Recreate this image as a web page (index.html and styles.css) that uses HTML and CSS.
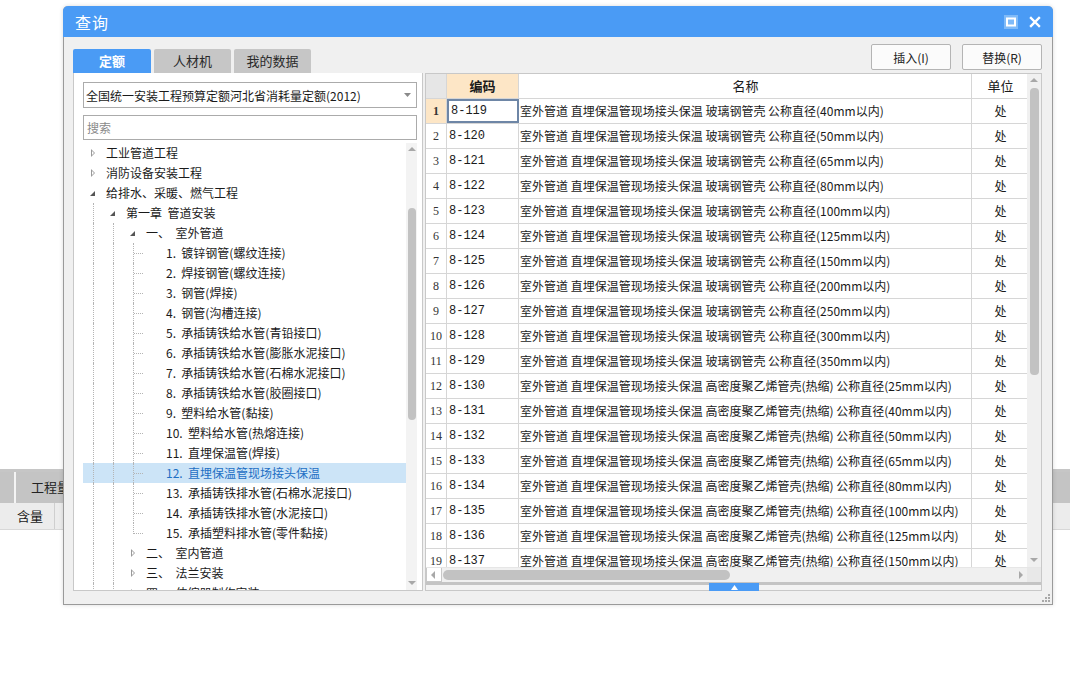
FILE: index.html
```html
<!DOCTYPE html>
<html lang="zh">
<head>
<meta charset="utf-8">
<title>查询</title>
<link rel="stylesheet" href="styles.css">
</head>
<body>
<div class="desk">
  <div class="bg-strip">
    <div class="bg-bar">
      <div class="bg-cell bg-cell-a"></div>
      <div class="bg-cell bg-cell-b">工程量</div>
    </div>
    <div class="bg-row">
      <div class="bg-sub">含量</div>
    </div>
  </div>

  <div class="dialog">
    <div class="titlebar">
      <span class="title">查询</span>
      <div class="tb-btns">
        <span class="tb-max"><svg width="14" height="14" viewBox="0 0 14 14"><rect x="0" y="0" width="14" height="14" fill="#7fbaf8"/><rect x="3" y="3.5" width="8" height="7" fill="none" stroke="#fff" stroke-width="2"/></svg></span>
        <span class="tb-close"><svg width="12" height="12" viewBox="0 0 12 12"><path d="M2 2 L10 10 M10 2 L2 10" stroke="#fff" stroke-width="2.4" stroke-linecap="square"/></svg></span>
      </div>
    </div>
    <div class="body">
      <div class="toolbar">
        <div class="tabs">
          <div class="tab active">定额</div>
          <div class="tab">人材机</div>
          <div class="tab">我的数据</div>
        </div>
        <div class="actions">
          <button class="btn">插入(I)</button>
          <button class="btn">替换(R)</button>
        </div>
      </div>
      <div class="panels">
        <div class="left">
          <div class="combo"><span>全国统一安装工程预算定额河北省消耗量定额(2012)</span><svg width="7" height="4" viewBox="0 0 7 4"><path d="M0 0 H7 L3.5 4Z" fill="#8a8a8a"/></svg></div>
          <div class="search">搜索</div>
          <div class="tree-wrap">
            <div class="tree">
              <div class="node l0"><i class="tw col"></i><span>工业管道工程</span></div>
              <div class="node l0"><i class="tw col"></i><span>消防设备安装工程</span></div>
              <div class="node l0"><i class="tw exp"></i><span>给排水、采暖、燃气工程</span></div>
              <div class="node l1"><i class="g g1"></i><i class="tw exp"></i><span>第一章  管道安装</span></div>
              <div class="node l2"><i class="g g1"></i><i class="g g2"></i><i class="tw exp"></i><span>一、  室外管道</span></div>
              <div class="node leaf"><i class="g g1"></i><i class="g g2"></i><i class="g g3"></i><i class="h"></i><span>1.  镀锌钢管(螺纹连接)</span></div>
              <div class="node leaf"><i class="g g1"></i><i class="g g2"></i><i class="g g3"></i><i class="h"></i><span>2.  焊接钢管(螺纹连接)</span></div>
              <div class="node leaf"><i class="g g1"></i><i class="g g2"></i><i class="g g3"></i><i class="h"></i><span>3.  钢管(焊接)</span></div>
              <div class="node leaf"><i class="g g1"></i><i class="g g2"></i><i class="g g3"></i><i class="h"></i><span>4.  钢管(沟槽连接)</span></div>
              <div class="node leaf"><i class="g g1"></i><i class="g g2"></i><i class="g g3"></i><i class="h"></i><span>5.  承插铸铁给水管(青铅接口)</span></div>
              <div class="node leaf"><i class="g g1"></i><i class="g g2"></i><i class="g g3"></i><i class="h"></i><span>6.  承插铸铁给水管(膨胀水泥接口)</span></div>
              <div class="node leaf"><i class="g g1"></i><i class="g g2"></i><i class="g g3"></i><i class="h"></i><span>7.  承插铸铁给水管(石棉水泥接口)</span></div>
              <div class="node leaf"><i class="g g1"></i><i class="g g2"></i><i class="g g3"></i><i class="h"></i><span>8.  承插铸铁给水管(胶圈接口)</span></div>
              <div class="node leaf"><i class="g g1"></i><i class="g g2"></i><i class="g g3"></i><i class="h"></i><span>9.  塑料给水管(黏接)</span></div>
              <div class="node leaf"><i class="g g1"></i><i class="g g2"></i><i class="g g3"></i><i class="h"></i><span>10.  塑料给水管(热熔连接)</span></div>
              <div class="node leaf"><i class="g g1"></i><i class="g g2"></i><i class="g g3"></i><i class="h"></i><span>11.  直埋保温管(焊接)</span></div>
              <div class="node leaf sel"><i class="g g1"></i><i class="g g2"></i><i class="g g3"></i><i class="h"></i><span>12.  直埋保温管现场接头保温</span></div>
              <div class="node leaf"><i class="g g1"></i><i class="g g2"></i><i class="g g3"></i><i class="h"></i><span>13.  承插铸铁排水管(石棉水泥接口)</span></div>
              <div class="node leaf"><i class="g g1"></i><i class="g g2"></i><i class="g g3"></i><i class="h"></i><span>14.  承插铸铁排水管(水泥接口)</span></div>
              <div class="node leaf last"><i class="g g1"></i><i class="g g2"></i><i class="g g3"></i><i class="h"></i><span>15.  承插塑料排水管(零件黏接)</span></div>
              <div class="node l2"><i class="g g1"></i><i class="g g2"></i><i class="tw col"></i><span>二、  室内管道</span></div>
              <div class="node l2"><i class="g g1"></i><i class="g g2"></i><i class="tw col"></i><span>三、  法兰安装</span></div>
              <div class="node l2"><i class="g g1"></i><i class="g g2"></i><i class="tw col"></i><span>四、  伸缩器制作安装</span></div>
            </div>
            <div class="vscroll small">
              <div class="arr up"></div>
              <div class="track"><div class="thumb t-left"></div></div>
              <div class="arr down"></div>
            </div>
          </div>
        </div>
        <div class="right">
          <div class="grid-main">
            <div class="grid">
              <div class="grow ghead">
                <div class="c cn"></div>
                <div class="c cc hl">编码</div>
                <div class="c cname center">名称</div>
                <div class="c cu">单位</div>
              </div>
              <div class="rows">
                <div class="grow"><div class="c cn hl b">1</div><div class="c cc cur">8-119</div><div class="c cname">室外管道 直埋保温管现场接头保温 玻璃钢管壳 公称直径(40mm以内)</div><div class="c cu">处</div></div>
                <div class="grow"><div class="c cn">2</div><div class="c cc">8-120</div><div class="c cname">室外管道 直埋保温管现场接头保温 玻璃钢管壳 公称直径(50mm以内)</div><div class="c cu">处</div></div>
                <div class="grow"><div class="c cn">3</div><div class="c cc">8-121</div><div class="c cname">室外管道 直埋保温管现场接头保温 玻璃钢管壳 公称直径(65mm以内)</div><div class="c cu">处</div></div>
                <div class="grow"><div class="c cn">4</div><div class="c cc">8-122</div><div class="c cname">室外管道 直埋保温管现场接头保温 玻璃钢管壳 公称直径(80mm以内)</div><div class="c cu">处</div></div>
                <div class="grow"><div class="c cn">5</div><div class="c cc">8-123</div><div class="c cname">室外管道 直埋保温管现场接头保温 玻璃钢管壳 公称直径(100mm以内)</div><div class="c cu">处</div></div>
                <div class="grow"><div class="c cn">6</div><div class="c cc">8-124</div><div class="c cname">室外管道 直埋保温管现场接头保温 玻璃钢管壳 公称直径(125mm以内)</div><div class="c cu">处</div></div>
                <div class="grow"><div class="c cn">7</div><div class="c cc">8-125</div><div class="c cname">室外管道 直埋保温管现场接头保温 玻璃钢管壳 公称直径(150mm以内)</div><div class="c cu">处</div></div>
                <div class="grow"><div class="c cn">8</div><div class="c cc">8-126</div><div class="c cname">室外管道 直埋保温管现场接头保温 玻璃钢管壳 公称直径(200mm以内)</div><div class="c cu">处</div></div>
                <div class="grow"><div class="c cn">9</div><div class="c cc">8-127</div><div class="c cname">室外管道 直埋保温管现场接头保温 玻璃钢管壳 公称直径(250mm以内)</div><div class="c cu">处</div></div>
                <div class="grow"><div class="c cn">10</div><div class="c cc">8-128</div><div class="c cname">室外管道 直埋保温管现场接头保温 玻璃钢管壳 公称直径(300mm以内)</div><div class="c cu">处</div></div>
                <div class="grow"><div class="c cn">11</div><div class="c cc">8-129</div><div class="c cname">室外管道 直埋保温管现场接头保温 玻璃钢管壳 公称直径(350mm以内)</div><div class="c cu">处</div></div>
                <div class="grow"><div class="c cn">12</div><div class="c cc">8-130</div><div class="c cname">室外管道 直埋保温管现场接头保温 高密度聚乙烯管壳(热缩) 公称直径(25mm以内)</div><div class="c cu">处</div></div>
                <div class="grow"><div class="c cn">13</div><div class="c cc">8-131</div><div class="c cname">室外管道 直埋保温管现场接头保温 高密度聚乙烯管壳(热缩) 公称直径(40mm以内)</div><div class="c cu">处</div></div>
                <div class="grow"><div class="c cn">14</div><div class="c cc">8-132</div><div class="c cname">室外管道 直埋保温管现场接头保温 高密度聚乙烯管壳(热缩) 公称直径(50mm以内)</div><div class="c cu">处</div></div>
                <div class="grow"><div class="c cn">15</div><div class="c cc">8-133</div><div class="c cname">室外管道 直埋保温管现场接头保温 高密度聚乙烯管壳(热缩) 公称直径(65mm以内)</div><div class="c cu">处</div></div>
                <div class="grow"><div class="c cn">16</div><div class="c cc">8-134</div><div class="c cname">室外管道 直埋保温管现场接头保温 高密度聚乙烯管壳(热缩) 公称直径(80mm以内)</div><div class="c cu">处</div></div>
                <div class="grow"><div class="c cn">17</div><div class="c cc">8-135</div><div class="c cname">室外管道 直埋保温管现场接头保温 高密度聚乙烯管壳(热缩) 公称直径(100mm以内)</div><div class="c cu">处</div></div>
                <div class="grow"><div class="c cn">18</div><div class="c cc">8-136</div><div class="c cname">室外管道 直埋保温管现场接头保温 高密度聚乙烯管壳(热缩) 公称直径(125mm以内)</div><div class="c cu">处</div></div>
                <div class="grow"><div class="c cn">19</div><div class="c cc">8-137</div><div class="c cname">室外管道 直埋保温管现场接头保温 高密度聚乙烯管壳(热缩) 公称直径(150mm以内)</div><div class="c cu">处</div></div>
              </div>
            </div>
            <div class="vscroll big">
              <div class="arr up"></div>
              <div class="track"><div class="thumb t-right"></div></div>
              <div class="arr down"></div>
            </div>
          </div>
          <div class="hscroll">
            <div class="harr left"></div>
            <div class="htrack"><div class="hthumb"></div></div>
            <div class="harr right-a"></div>
            <div class="corner"></div>
          </div>
          <div class="splitter">
            <div class="split-tab"><svg width="7" height="5" viewBox="0 0 7 5"><path d="M0 5 H7 L3.5 0Z" fill="#fff"/></svg></div>
          </div>
        </div>
      </div>
      <div class="grip"><svg width="8" height="8" viewBox="0 0 8 8"><g fill="#a8a8a8"><rect x="6" y="0" width="2" height="2"/><rect x="3" y="3" width="2" height="2"/><rect x="6" y="3" width="2" height="2"/><rect x="0" y="6" width="2" height="2"/><rect x="3" y="6" width="2" height="2"/><rect x="6" y="6" width="2" height="2"/></g></svg></div>
    </div>
  </div>
</div>
</body>
</html>
```
FILE: styles.css
```css
* { box-sizing: border-box; }
html, body { margin: 0; padding: 0; background: #fff; }
body {
  font-family: "Noto Sans CJK SC", "Noto Sans", sans-serif;
  font-size: 12px;
  color: #1a1a1a;
  width: 1070px;
  height: 675px;
  overflow: hidden;
}
.desk { position: relative; width: 1070px; height: 675px; }

/* background application strip */
.bg-strip { padding-top: 469px; }
.bg-bar {
  border-top: 3px solid #c6c6c6;
  height: 34px;
  background: #c4c4c4;
  display: flex;
}
.bg-cell-a { width: 16px; border-right: 2px solid #f4f4f4; }
.bg-cell-b { padding-left: 15px; line-height: 30px; font-size: 13px; color: #222; }
.bg-row { height: 27px; background: #ececec; border-bottom: 1px solid #d8d8d8; display: flex; }
.bg-sub { width: 55px; border-right: 1px solid #cfcfcf; line-height: 26px; padding-left: 17px; font-size: 13px; }

/* dialog window */
.dialog {
  position: absolute;
  left: 63px;
  top: 6px;
  width: 990px;
  height: 599px;
  border: 1px solid #9a9a9a;
  border-top: none;
  border-radius: 5px 5px 0 0;
  background: #f0f0f0;
  box-shadow: 0 0 4px rgba(0,0,0,0.15);
  display: flex;
  flex-direction: column;
}
.titlebar {
  height: 31px;
  flex-shrink: 0;
  background: #4a9bf5;
  border-radius: 5px 5px 0 0;
  display: flex;
  align-items: center;
  justify-content: space-between;
  padding: 0 12px 0 12px;
  margin: 0 -1px;
}
.title { color: #fff; font-size: 16px; letter-spacing: 1px; }
.tb-btns { display: flex; align-items: center; gap: 11px; }
.tb-max, .tb-close { display: flex; }

.body { flex: 1; min-height: 0; display: flex; flex-direction: column; padding: 7px 10px 13px 9px; position: relative; }
.toolbar { display: flex; justify-content: space-between; height: 29px; flex-shrink: 0; }
.tabs { display: flex; align-items: flex-end; gap: 3px; }
.tab {
  height: 24px;
  width: 77px;
  background: #c6c6c6;
  border-radius: 2px 2px 0 0;
  text-align: center;
  line-height: 24px;
  font-size: 13px;
  color: #2a2a2a;
}
.tab.active { width: 78px; background: #4a9bf5; color: #fff; font-weight: bold; }
.actions { display: flex; gap: 11px; align-items: flex-start; }
.btn {
  width: 80px;
  height: 26px;
  background: #fbfbfb;
  border: 1px solid #b4b4b4;
  border-radius: 2px;
  font-family: inherit;
  font-size: 12px;
  color: #222;
  padding: 0;
}

.panels { flex: 1; display: flex; gap: 2px; min-height: 0; }

/* left tree panel */
.left {
  width: 350px;
  background: #fff;
  border: 1px solid #c8c8c8;
  border-top: none;
  padding: 9px 5px 0 9px;
  display: flex;
  flex-direction: column;
  min-height: 0;
  overflow: hidden;
}
.combo {
  height: 26px;
  flex-shrink: 0;
  border: 1px solid #ababab;
  display: flex;
  align-items: center;
  justify-content: space-between;
  padding: 0 5px 0 2px;
  font-size: 12px;
}
.search {
  margin-top: 7px;
  height: 25px;
  flex-shrink: 0;
  border: 1px solid #ababab;
  padding-left: 3px;
  line-height: 23px;
  color: #8a8a8a;
  font-size: 12px;
}
.tree-wrap { flex: 1; display: flex; margin-top: 3px; min-height: 0; overflow: hidden; }
.tree { flex: 1; overflow: hidden; }
.node {
  position: relative;
  height: 20px;
  line-height: 20px;
  white-space: nowrap;
  font-size: 12px;
  color: #1a1a1a;
}
.node span { position: absolute; top: 0; white-space: pre; }
.l0 span { left: 23px; }
.l1 span { left: 43px; }
.l2 span { left: 63px; }
.leaf span { left: 83px; }
.node.sel { background: #cce4f7; }
.node.sel span { color: #1d6fc4; }

.tw { position: absolute; top: 6px; width: 8px; height: 8px; }
.l0 .tw { left: 6px; }
.l1 .tw { left: 26px; }
.l2 .tw { left: 46px; }
.tw.col::before {
  content: "";
  position: absolute;
  left: 2px; top: 0;
  border-left: 4px solid #9a9a9a;
  border-top: 4px solid transparent;
  border-bottom: 4px solid transparent;
}
.tw.col::after {
  content: "";
  position: absolute;
  left: 3px; top: 2px;
  border-left: 2px solid #fff;
  border-top: 2px solid transparent;
  border-bottom: 2px solid transparent;
}
.tw.exp::before {
  content: "";
  position: absolute;
  left: 1px; top: 2px;
  border-right: 5px solid #555;
  border-top: 5px solid transparent;
}
/* dotted guide lines */
.g { position: absolute; top: 0; height: 20px; border-left: 1px dotted #b4b4b4; }
.g1 { left: 10px; }
.g2 { left: 30px; }
.g3 { left: 50px; }
.h { position: absolute; left: 51px; top: 10px; width: 9px; border-top: 1px dotted #b4b4b4; }
.leaf.last .g3 { height: 11px; }

/* scrollbars */
.vscroll { width: 11px; display: flex; flex-direction: column; background: #f3f3f3; }
.vscroll.big { width: 14px; background: #f0f0f0; }
.arr { height: 14px; position: relative; flex-shrink: 0; }
.arr.up::before, .arr.down::before {
  content: "";
  position: absolute;
  left: 50%;
  margin-left: -4px;
  border-left: 4px solid transparent;
  border-right: 4px solid transparent;
}
.arr.up::before { top: 4px; border-bottom: 4px solid #a8a8a8; }
.arr.down::before { top: 5px; border-top: 4px solid #a8a8a8; }
.track { flex: 1; position: relative; }
.thumb { position: absolute; left: 2px; right: 1px; background: #c2c2c2; border-radius: 4px; }
.t-left { top: 51px; height: 212px; }
.t-right { top: 0px; height: 287px; left: 3px; right: 2px; }

/* right grid panel */
.right {
  flex: 1;
  display: flex;
  flex-direction: column;
  border: 1px solid #c8c8c8;
  background: #fff;
  min-width: 0;
  min-height: 0;
}
.grid-main { flex: 1; display: flex; min-height: 0; }
.grid { flex: 1; display: flex; flex-direction: column; overflow: hidden; }
.rows { flex: 1; overflow: hidden; min-height: 0; }
.grow { display: flex; height: 25px; border-bottom: 1px solid #d6d6d6; flex-shrink: 0; }
.ghead { height: 25px; }
.c {
  border-right: 1px solid #d6d6d6;
  line-height: 24px;
  white-space: nowrap;
  overflow: hidden;
  font-size: 12px;
  flex-shrink: 0;
}
.cn { width: 21px; background: #fff; text-align: center; color: #333; font-family: "Liberation Serif", "Noto Sans CJK SC", serif; font-size: 12px; }
.cc { width: 72px; padding-left: 2px; font-family: "Liberation Mono", "DejaVu Sans Mono", monospace; font-size: 12px; }
.cname { width: 453px; padding-left: 1px; }
.cu { width: 57px; text-align: center; border-right: none; }
.ghead .cn { background: #e6e6e6; }
.ghead .c { font-size: 13px; }
.ghead .cc { text-align: center; font-family: "Noto Sans CJK SC", sans-serif; font-weight: bold; padding: 0; }
.center { text-align: center; }
.hl { background: #fde6c6 !important; }
.b { font-weight: bold; }
.cur { outline: 2px solid #6e86a6; outline-offset: -2px; border-left: 2px solid #5b9ee6; }

.hscroll { height: 15px; flex-shrink: 0; display: flex; background: #f0f0f0; border-top: 1px solid #e6e6e6; }
.harr { width: 12px; position: relative; }
.harr.left::before, .harr.right-a::before {
  content: "";
  position: absolute;
  top: 3px;
  border-top: 4px solid transparent;
  border-bottom: 4px solid transparent;
}
.harr.left::before { left: 4px; border-right: 4px solid #a8a8a8; }
.harr.right-a::before { left: 4px; border-left: 4px solid #a8a8a8; }
.htrack { flex: 1; position: relative; }
.hthumb { position: absolute; left: 1px; width: 287px; top: 2px; height: 10px; background: #c2c2c2; border-radius: 5px; }
.corner { width: 14px; background: #e8e8e8; }
.splitter { height: 8px; flex-shrink: 0; border-top: 3px solid #c4c4c4; background: #f3f3f3; display: flex; justify-content: center; position: relative; }
.split-tab {
  position: absolute;
  left: 283px;
  top: -2px;
  width: 50px;
  height: 8px;
  background: #4a9bf5;
  display: flex;
  align-items: center;
  justify-content: center;
}
.grip { position: absolute; right: 2px; bottom: 2px; display: flex; }
```
